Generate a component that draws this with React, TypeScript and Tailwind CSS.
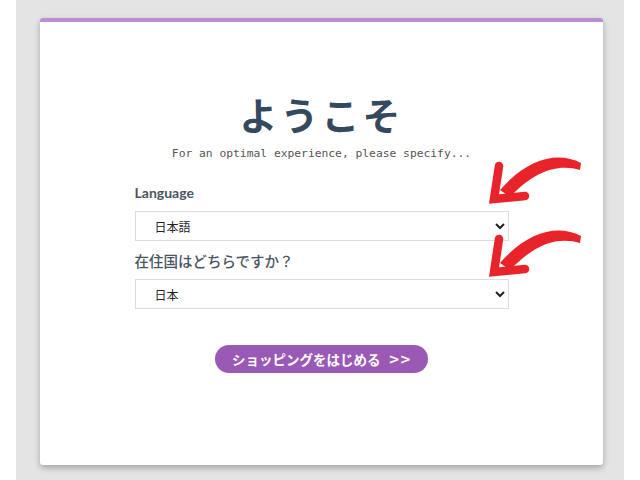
import { useState } from 'react';

// 手書き風の赤い矢印
function RedArrow({ className }: { className?: string }) {
  return (
    <svg className={className} width="96" height="54" viewBox="0 0 96 54" fill="none">
      <path
        d="M93 11 C70 -1 40 6 12 38 L22 45 C48 18 70 12 92 18 Z"
        fill="#e8232a"
      />
      <path
        d="M11 14 L6 47 L37 44"
        stroke="#e8232a"
        strokeWidth="8.5"
        strokeLinejoin="miter"
        strokeLinecap="round"
      />
    </svg>
  );
}

export default function App() {
  const [language, setLanguage] = useState('ja');
  const [country, setCountry] = useState('jp');

  return (
    <div className="w-full h-[480px] bg-white px-4 font-['Lato','Noto_Sans_CJK_JP',sans-serif]">
      <div className="h-full bg-[#e4e4e4] pt-[18px] pl-6">
        {/* ウェルカムカード */}
        <div className="relative w-[563px] h-[447px] bg-white border-t-4 border-[#bb8fce] rounded-[3px] shadow-[0_3px_6px_rgba(0,0,0,0.28)] flex flex-col items-center">
          <h1 className="mt-[70px] text-[38px] leading-[44px] font-bold tracking-[3px] text-[#34495e] font-['Noto_Sans_CJK_JP',sans-serif]">
            ようこそ
          </h1>
          <p className="mt-[10px] text-[11.3px] leading-[16px] text-[#555] font-['DejaVu_Sans_Mono',monospace]">
            For an optimal experience, please specify...
          </p>

          <div className="w-[374px] mt-[22px]">
            <label className="block text-[14px] leading-[18px] font-bold text-[#4a5563]">Language</label>
            <select
              value={language}
              onChange={(e) => setLanguage(e.target.value)}
              className="mt-[9px] w-full h-[30px] pl-[15px] pr-1 border border-[#dcdcdc] bg-white text-[12px] text-[#222] font-['Noto_Sans_CJK_JP',sans-serif]"
            >
              <option value="ja">日本語</option>
              <option value="en">English</option>
            </select>

            <label className="block mt-[11px] text-[14.5px] leading-[18px] font-medium text-[#4a5563] font-['Noto_Sans_CJK_JP',sans-serif]">
              在住国はどちらですか？
            </label>
            <select
              value={country}
              onChange={(e) => setCountry(e.target.value)}
              className="mt-[9px] w-full h-[30px] pl-[15px] pr-1 border border-[#dcdcdc] bg-white text-[12px] text-[#222] font-['Noto_Sans_CJK_JP',sans-serif]"
            >
              <option value="jp">日本</option>
              <option value="us">アメリカ</option>
            </select>
          </div>

          <button className="mt-[36px] w-[213px] h-[28px] rounded-full bg-[#9b59b6] text-white text-[13.5px] font-bold font-['Noto_Sans_CJK_JP',sans-serif] flex items-center justify-center gap-2">
            ショッピングをはじめる
            <span className="font-['DejaVu_Sans',sans-serif]">&gt;&gt;</span>
          </button>

          <RedArrow className="absolute left-[448px] top-[130px]" />
          <RedArrow className="absolute left-[448px] top-[203px]" />
        </div>
      </div>
    </div>
  );
}
